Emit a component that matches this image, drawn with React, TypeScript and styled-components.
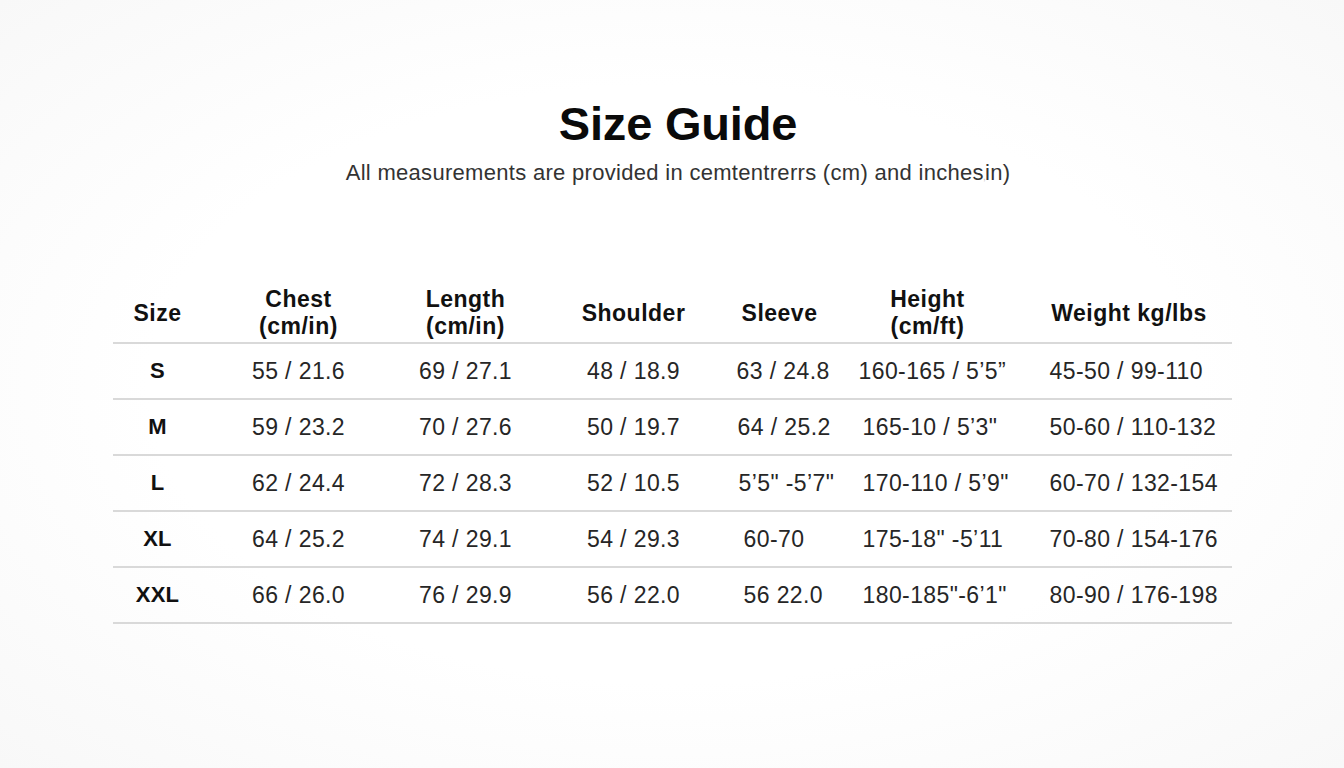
import React from "react";
import styled, { createGlobalStyle } from "styled-components";

const Global = createGlobalStyle`
  html, body { margin: 0; padding: 0; background: #fdfdfd; }
  body { font-family: "Liberation Sans", Arial, sans-serif; color: #111; }
`;

const Page = styled.main`
  width: 1344px;
  height: 768px;
  box-sizing: border-box;
  padding-top: 96px;
  display: flex;
  flex-direction: column;
  align-items: center;
  background: radial-gradient(ellipse at center, #ffffff 55%, #f8f8f8 100%);
`;

const Heading = styled.header`
  display: flex;
  flex-direction: column;
  align-items: center;
  padding-left: 12px;
`;

const Title = styled.h1`
  margin: 0;
  font-size: 47px;
  line-height: 56px;
  font-weight: 700;
  color: #0a0a0a;
  letter-spacing: -0.2px;
`;

const Subtitle = styled.p`
  margin: 8px 0 0;
  font-size: 22px;
  line-height: 26px;
  color: #333;
  font-weight: 400;
  letter-spacing: 0.3px;
`;

const Faint = styled.span`
  color: #c4c4c4;
  font-size: 10px;
  margin: 0 -1px;
`;

const Table = styled.div`
  margin-top: 94px;
  width: 1119px;
  display: grid;
  grid-template-columns: 90px 192px 142px 194px 98px 198px 205px;
`;

const HeadCell = styled.div`
  height: 58px;
  display: flex;
  align-items: center;
  justify-content: center;
  text-align: center;
  font-size: 23px;
  line-height: 27px;
  font-weight: 700;
  letter-spacing: 0.5px;
  color: #111;
  border-bottom: 2px solid #d9d9d9;
`;

const Cell = styled.div<{ $left?: number; $bold?: boolean }>`
  height: 54px;
  display: flex;
  align-items: center;
  justify-content: ${(p) => (p.$left !== undefined ? "flex-start" : "center")};
  padding-left: ${(p) => (p.$left !== undefined ? `${p.$left}px` : "0")};
  font-size: ${(p) => (p.$bold ? "22px" : "23px")};
  letter-spacing: ${(p) => (p.$bold ? "0.3px" : "0.4px")};
  font-weight: ${(p) => (p.$bold ? 700 : 400)};
  color: ${(p) => (p.$bold ? "#111" : "#262626")};
  border-bottom: 2px solid #d9d9d9;
  white-space: nowrap;
`;

const headers: React.ReactNode[] = [
  "Size",
  <>Chest<br />(cm/in)</>,
  <>Length<br />(cm/in)</>,
  "Shoulder",
  "Sleeve",
  <>Height<br />(cm/ft)</>,
  "Weight kg/lbs",
];

type Row = { size: string; cells: string[]; sleeveIndent: number; heightIndent: number };

const rows: Row[] = [
  { size: "S", cells: ["55 / 21.6", "69 / 27.1", "48 / 18.9", "63 / 24.8", "160-165 / 5\u20195\u201D", "45-50 / 99-110"], sleeveIndent: 6, heightIndent: 30 },
  { size: "M", cells: ["59 / 23.2", "70 / 27.6", "50 / 19.7", "64 / 25.2", "165-10 / 5\u20193\"", "50-60 / 110-132"], sleeveIndent: 7, heightIndent: 34 },
  { size: "L", cells: ["62 / 24.4", "72 / 28.3", "52 / 10.5", "5\u20195\" -5\u20197\"", "170-110 / 5\u20199\"", "60-70 / 132-154"], sleeveIndent: 8, heightIndent: 34 },
  { size: "XL", cells: ["64 / 25.2", "74 / 29.1", "54 / 29.3", "60-70", "175-18\" -5\u201911", "70-80 / 154-176"], sleeveIndent: 13, heightIndent: 34 },
  { size: "XXL", cells: ["66 / 26.0", "76 / 29.9", "56 / 22.0", "56 22.0", "180-185\"-6\u20191\"", "80-90 / 176-198"], sleeveIndent: 13, heightIndent: 34 },
];

export default function App() {
  return (
    <>
      <Global />
      <Page>
        <Heading>
          <Title>Size Guide</Title>
          <Subtitle>
            All measurements are provided in cemtentrerrs (cm) and inches<Faint>,</Faint>in)
          </Subtitle>
        </Heading>
        <Table>
          {headers.map((h, i) => (
            <HeadCell key={i}>{h}</HeadCell>
          ))}
          {rows.map((r) => (
            <React.Fragment key={r.size}>
              <Cell $bold>{r.size}</Cell>
              <Cell>{r.cells[0]}</Cell>
              <Cell>{r.cells[1]}</Cell>
              <Cell>{r.cells[2]}</Cell>
              <Cell $left={r.sleeveIndent}>{r.cells[3]}</Cell>
              <Cell $left={r.heightIndent}>{r.cells[4]}</Cell>
              <Cell $left={23}>{r.cells[5]}</Cell>
            </React.Fragment>
          ))}
        </Table>
      </Page>
    </>
  );
}
